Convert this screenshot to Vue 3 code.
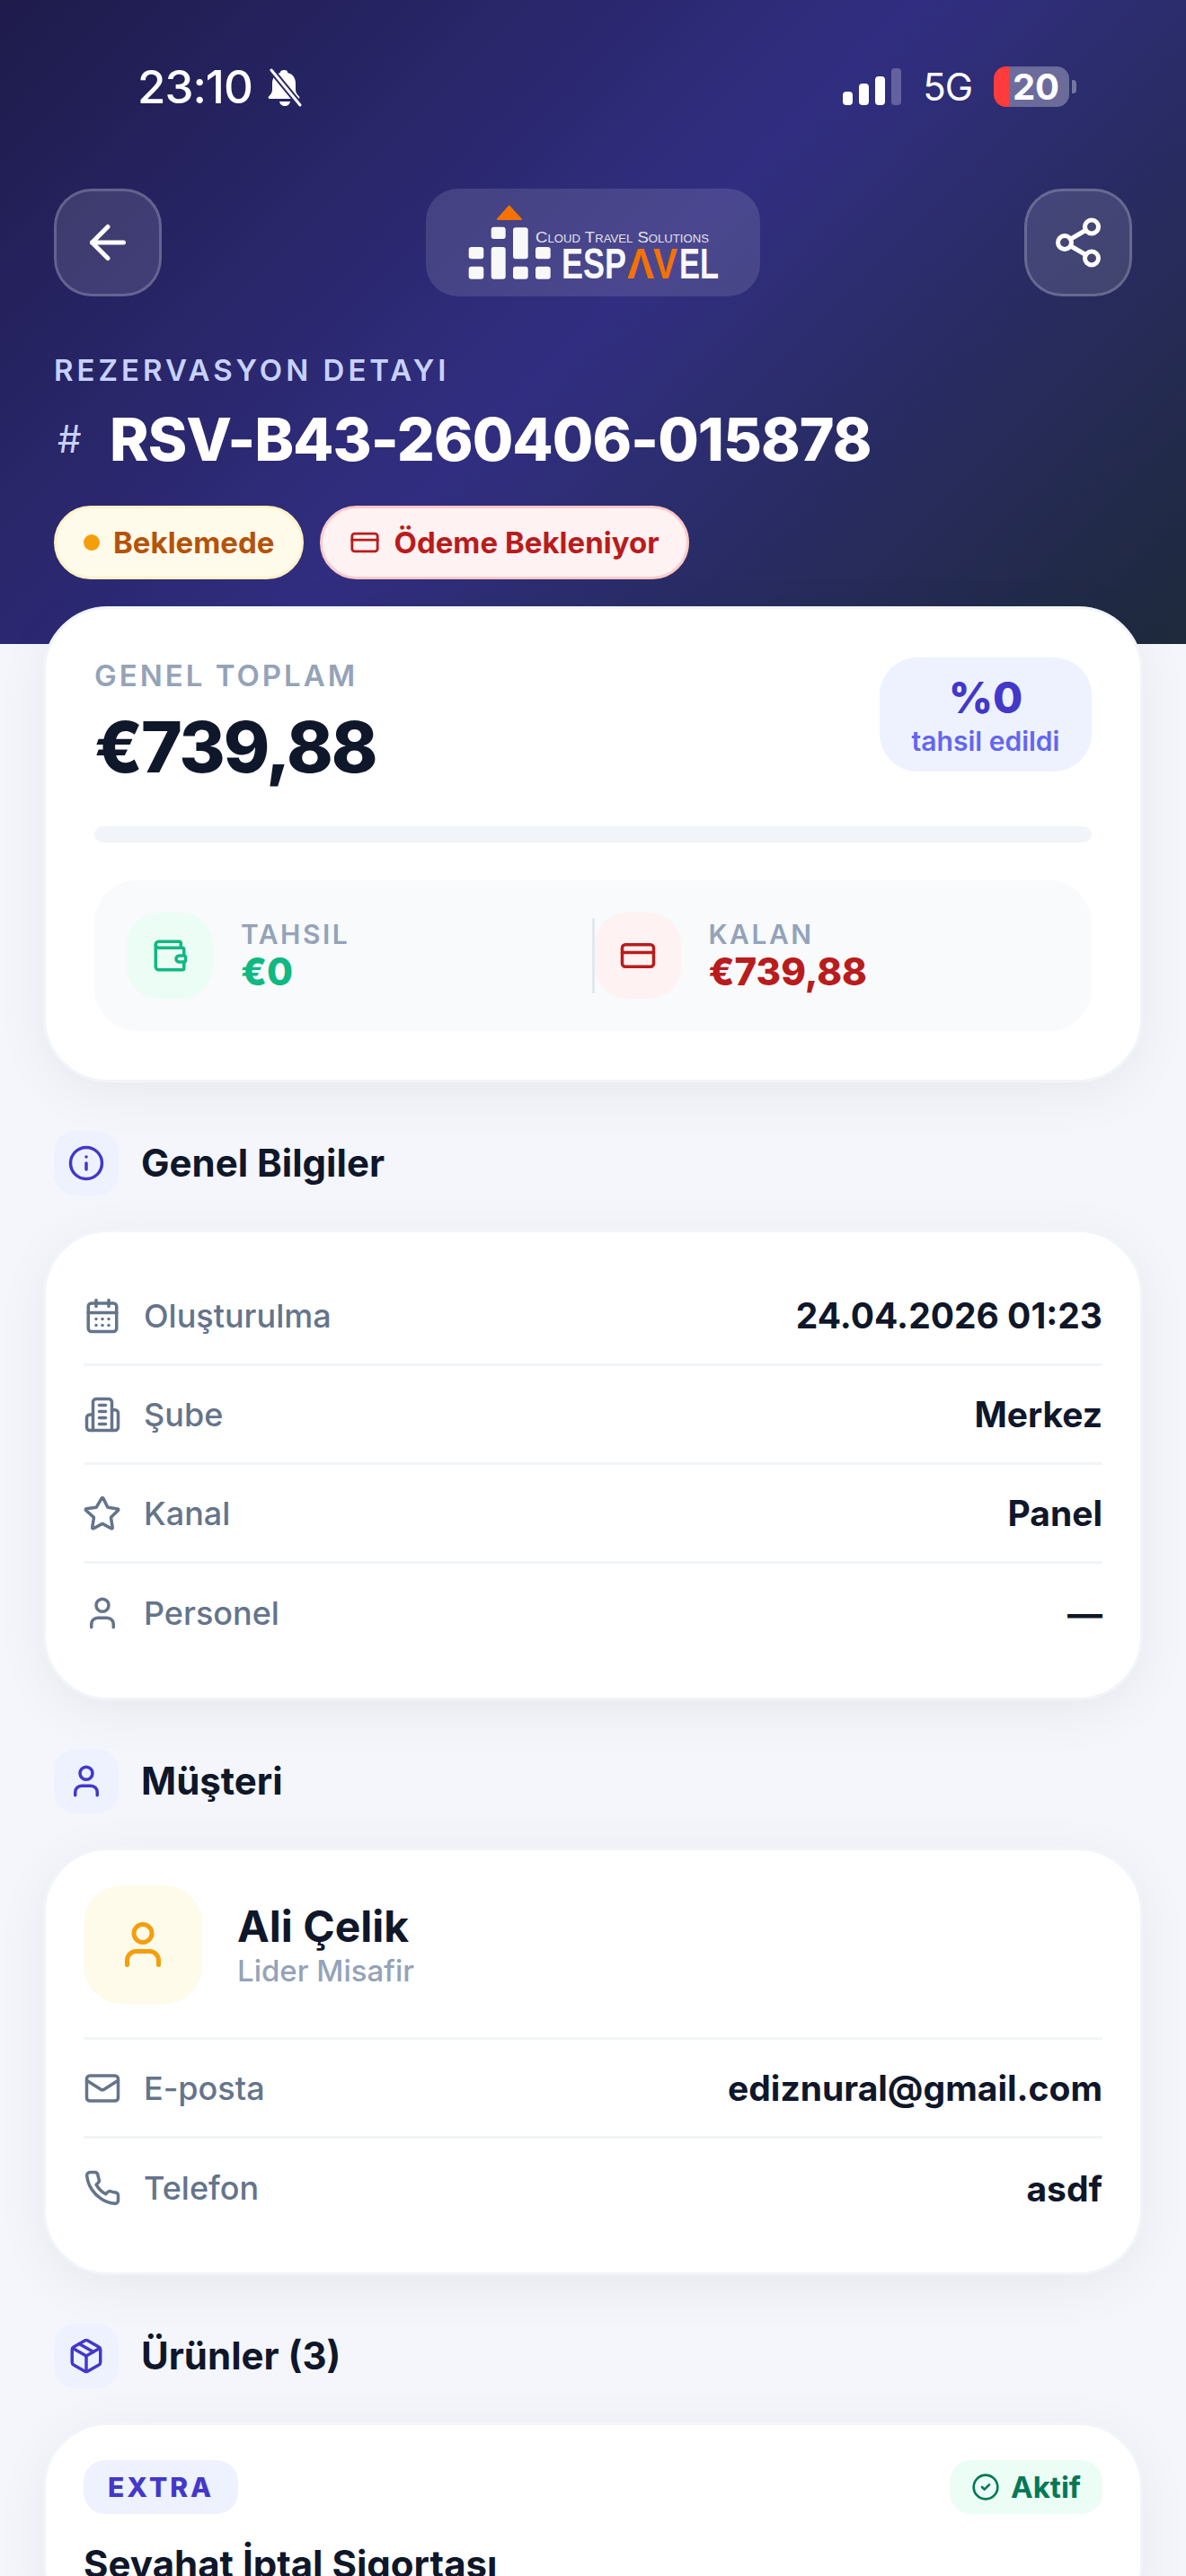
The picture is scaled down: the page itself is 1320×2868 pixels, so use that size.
<script setup>
const icons = {
  arrow: '<path d="m12 19-7-7 7-7"/><path d="M19 12H5"/>',
  share: '<circle cx="18" cy="5" r="3"/><circle cx="6" cy="12" r="3"/><circle cx="18" cy="19" r="3"/><line x1="8.59" x2="15.42" y1="13.51" y2="17.49"/><line x1="15.41" x2="8.59" y1="6.51" y2="10.49"/>',
  card: '<rect width="20" height="14" x="2" y="5" rx="2"/><line x1="2" x2="22" y1="10" y2="10"/>',
  wallet: '<path d="M19 7V4a1 1 0 0 0-1-1H5a2 2 0 0 0 0 4h15a1 1 0 0 1 1 1v4h-3a2 2 0 0 0 0 4h3a1 1 0 0 0 1-1v-2a1 1 0 0 0-1-1"/><path d="M3 5v14a2 2 0 0 0 2 2h15a1 1 0 0 0 1-1v-4"/>',
  info: '<circle cx="12" cy="12" r="10"/><path d="M12 16v-4"/><path d="M12 8h.01"/>',
  calendar: '<path d="M8 2v4"/><path d="M16 2v4"/><rect width="18" height="18" x="3" y="4" rx="2"/><path d="M3 10h18"/><path d="M8 14h.01"/><path d="M12 14h.01"/><path d="M16 14h.01"/><path d="M8 18h.01"/><path d="M12 18h.01"/><path d="M16 18h.01"/>',
  building: '<path d="M6 22V4a2 2 0 0 1 2-2h8a2 2 0 0 1 2 2v18Z"/><path d="M6 12H4a2 2 0 0 0-2 2v6a2 2 0 0 0 2 2h2"/><path d="M18 9h2a2 2 0 0 1 2 2v9a2 2 0 0 1-2 2h-2"/><path d="M10 6h4"/><path d="M10 10h4"/><path d="M10 14h4"/><path d="M10 18h4"/>',
  star: '<path d="M11.5 2.3a.55.55 0 0 1 1 0l2.7 5.6a.55.55 0 0 0 .4.3l6.1.9a.55.55 0 0 1 .3.95l-4.4 4.3a.55.55 0 0 0-.16.5l1 6.1a.55.55 0 0 1-.8.6l-5.4-2.9a.55.55 0 0 0-.52 0l-5.4 2.9a.55.55 0 0 1-.8-.6l1-6.1a.55.55 0 0 0-.16-.5L1.5 10a.55.55 0 0 1 .3-.95l6.1-.9a.55.55 0 0 0 .4-.3z"/>',
  user: '<path d="M19 21v-2a4 4 0 0 0-4-4H9a4 4 0 0 0-4 4v2"/><circle cx="12" cy="7" r="4"/>',
  mail: '<rect width="20" height="16" x="2" y="4" rx="2"/><path d="m22 7-8.97 5.7a1.94 1.94 0 0 1-2.06 0L2 7"/>',
  phone: '<path d="M22 16.92v3a2 2 0 0 1-2.18 2 19.79 19.79 0 0 1-8.63-3.07 19.5 19.5 0 0 1-6-6 19.79 19.79 0 0 1-3.07-8.67A2 2 0 0 1 4.11 2h3a2 2 0 0 1 2 1.72 12.84 12.84 0 0 0 .7 2.81 2 2 0 0 1-.45 2.11L8.09 9.91a16 16 0 0 0 6 6l1.27-1.27a2 2 0 0 1 2.11-.45 12.84 12.84 0 0 0 2.81.7A2 2 0 0 1 22 16.92z"/>',
  box: '<path d="M11 21.73a2 2 0 0 0 2 0l7-4A2 2 0 0 0 21 16V8a2 2 0 0 0-1-1.73l-7-4a2 2 0 0 0-2 0l-7 4A2 2 0 0 0 3 8v8a2 2 0 0 0 1 1.73z"/><path d="M12 22V12"/><path d="m3.3 7 8.7 5 8.7-5"/><path d="m7.5 4.27 9 5.15"/>',
  check: '<circle cx="12" cy="12" r="10"/><path d="m9 12 2 2 4-4"/>'
}
const infoRows = [
  { icon: 'calendar', label: 'Oluşturulma', value: '24.04.2026 01:23' },
  { icon: 'building', label: 'Şube', value: 'Merkez' },
  { icon: 'star', label: 'Kanal', value: 'Panel' },
  { icon: 'user', label: 'Personel', value: '—' }
]
const contactRows = [
  { icon: 'mail', label: 'E-posta', value: 'ediznural@gmail.com' },
  { icon: 'phone', label: 'Telefon', value: 'asdf' }
]
const bars = [
  { h: 15, on: true },
  { h: 24, on: true },
  { h: 32, on: true },
  { h: 41, on: false }
]
</script>

<template>
  <div class="page">
    <header class="hero">
      <div class="status">
        <div class="status-left">
          <span class="time">23:10</span>
          <svg class="bell" viewBox="0 0 44 44" width="44" height="44">
            <path d="M22 3c1.8 0 3 1.3 3.2 3 5.8 1.4 8.8 6 8.8 12v7c0 3 1.6 5 4 7.5 .8.9.3 2.5-1 2.5H5c-1.300 0-1.800-1.600-1-2.500C6.400 30 8 28 8 25v-7c0-6 3-10.600 8.800-12C17 4.300 18.200 3 22 3z" fill="#fff"/>
            <path d="M16 38h12c-.5 3-3 5-6 5s-5.500-2-6-5z" fill="#fff"/>
            <path d="M7 3 39 42" stroke="#2a2868" stroke-width="7"/>
            <path d="M7 3 39 42" stroke="#fff" stroke-width="3" stroke-linecap="round"/>
          </svg>
        </div>
        <div class="status-right">
          <div class="signal">
            <i v-for="b in bars" :key="b.h" :class="{ dim: !b.on }" :style="{ height: b.h + 'px' }"></i>
          </div>
          <span class="net">5G</span>
          <div class="battery"><b>20</b></div>
          <i class="nub"></i>
        </div>
      </div>

      <div class="nav">
        <button class="nav-btn">
          <svg class="ic" viewBox="0 0 24 24" width="60" height="60" stroke="#fff" stroke-width="2" v-html="icons.arrow"></svg>
        </button>
        <div class="logo">
          <svg viewBox="0 0 372 120" width="372" height="120">
            <path d="M92.700 18.300 106.700 33.500a1 1 0 0 1-.8 1.500H79.800a1 1 0 0 1-.8-1.500z" fill="#f57200"/>
            <g fill="#f8f8f8">
              <rect x="72.700" y="42.700" width="16" height="13.300" rx="3"/>
              <rect x="97" y="43.300" width="16.700" height="35" rx="3"/>
              <rect x="47.700" y="65" width="16.600" height="13.300" rx="3"/>
              <rect x="72.700" y="65" width="16" height="35.700" rx="3"/>
              <rect x="122" y="65" width="16.700" height="13.300" rx="3"/>
              <rect x="47.700" y="86.700" width="16.600" height="14" rx="3"/>
              <rect x="97" y="86.700" width="16.700" height="14" rx="3"/>
              <rect x="122" y="86.700" width="16.700" height="14" rx="3"/>
            </g>
            <text class="logo-sub" x="122" y="60" textLength="193" lengthAdjust="spacingAndGlyphs">Cloud Travel Solutions</text>
            <text class="logo-big" x="151" y="100" textLength="72" lengthAdjust="spacingAndGlyphs">ESP</text>
            <text class="logo-big orange" x="224" y="100" textLength="30" lengthAdjust="spacingAndGlyphs">Λ</text>
            <text class="logo-big orange" x="253" y="100" textLength="27" lengthAdjust="spacingAndGlyphs">V</text>
            <text class="logo-big" x="282" y="100" textLength="44" lengthAdjust="spacingAndGlyphs">EL</text>
          </svg>
        </div>
        <button class="nav-btn">
          <svg class="ic" viewBox="0 0 24 24" width="60" height="60" stroke="#fff" stroke-width="2" v-html="icons.share"></svg>
        </button>
      </div>

      <div class="eyebrow">REZERVASYON DETAYI</div>
      <h1 class="title"><span class="hash">#</span>RSV-B43-260406-015878</h1>
      <div class="pills">
        <span class="pill amber"><i class="dot"></i>Beklemede</span>
        <span class="pill red">
          <svg class="ic" viewBox="0 0 24 24" width="34" height="34" stroke="#b91c1c" stroke-width="2" v-html="icons.card"></svg>
          Ödeme Bekleniyor
        </span>
      </div>
    </header>

    <main class="content">
      <section class="card total">
        <div class="total-top">
          <div>
            <div class="total-label">GENEL TOPLAM</div>
            <div class="total-amount">€739,88</div>
          </div>
          <div class="rate">
            <strong>%0</strong>
            <span>tahsil edildi</span>
          </div>
        </div>
        <div class="progress"></div>
        <div class="stats">
          <div class="stat">
            <div class="stat-icon green">
              <svg class="ic" viewBox="0 0 24 24" width="42" height="42" stroke="#10b981" stroke-width="2" v-html="icons.wallet"></svg>
            </div>
            <div>
              <div class="stat-label">TAHSIL</div>
              <div class="stat-value green-t">€0</div>
            </div>
          </div>
          <i class="stat-sep"></i>
          <div class="stat">
            <div class="stat-icon rose">
              <svg class="ic" viewBox="0 0 24 24" width="42" height="42" stroke="#b91c1c" stroke-width="2" v-html="icons.card"></svg>
            </div>
            <div>
              <div class="stat-label">KALAN</div>
              <div class="stat-value red-t">€739,88</div>
            </div>
          </div>
        </div>
      </section>

      <div class="sec-head">
        <span class="sec-icon"><svg class="ic" viewBox="0 0 24 24" width="42" height="42" stroke="#4338ca" stroke-width="2" v-html="icons.info"></svg></span>
        <h2>Genel Bilgiler</h2>
      </div>
      <section class="card list">
        <div v-for="r in infoRows" :key="r.label" class="row">
          <svg class="ic" viewBox="0 0 24 24" width="42" height="42" stroke="#64748b" stroke-width="2" v-html="icons[r.icon]"></svg>
          <span class="row-label">{{ r.label }}</span>
          <span class="row-value">{{ r.value }}</span>
        </div>
      </section>

      <div class="sec-head">
        <span class="sec-icon"><svg class="ic" viewBox="0 0 24 24" width="42" height="42" stroke="#4338ca" stroke-width="2" v-html="icons.user"></svg></span>
        <h2>Müşteri</h2>
      </div>
      <section class="card list">
        <div class="person">
          <div class="avatar">
            <svg class="ic" viewBox="0 0 24 24" width="60" height="60" stroke="#f59e0b" stroke-width="2" v-html="icons.user"></svg>
          </div>
          <div>
            <div class="person-name">Ali Çelik</div>
            <div class="person-sub">Lider Misafir</div>
          </div>
        </div>
        <div v-for="r in contactRows" :key="r.label" class="row">
          <svg class="ic" viewBox="0 0 24 24" width="42" height="42" stroke="#64748b" stroke-width="2" v-html="icons[r.icon]"></svg>
          <span class="row-label">{{ r.label }}</span>
          <span class="row-value">{{ r.value }}</span>
        </div>
      </section>

      <div class="sec-head">
        <span class="sec-icon"><svg class="ic" viewBox="0 0 24 24" width="42" height="42" stroke="#4338ca" stroke-width="2" v-html="icons.box"></svg></span>
        <h2>Ürünler (3)</h2>
      </div>
      <section class="card product">
        <div class="product-top">
          <span class="tag">EXTRA</span>
          <span class="active">
            <svg class="ic" viewBox="0 0 24 24" width="32" height="32" stroke="#047857" stroke-width="2" v-html="icons.check"></svg>
            Aktif
          </span>
        </div>
        <div class="product-name">Seyahat İptal Sigortası</div>
      </section>
    </main>
  </div>
</template>

<style scoped>
.page {
  height: 2868px;
  overflow: hidden;
  background: #f4f6fb;
  font-family: Inter, "Noto Sans", sans-serif;
  color: #0f172a;
}
.ic { fill: none; stroke-linecap: round; stroke-linejoin: round; flex: none; display: block; }
.hero {
  height: 717px;
  box-sizing: border-box;
  padding: 74px 60px 0;
  background: linear-gradient(135deg, #1e1b4b 0%, #312e81 50%, #1e293b 100%);
  color: #fff;
}
.status { display: flex; justify-content: space-between; height: 45px; padding: 0 62px 0 93px; }
.status-left { display: flex; align-items: center; gap: 14px; }
.time { font-size: 51px; font-weight: 500; letter-spacing: -1px; line-height: 45px; }
.status-right { display: flex; align-items: center; }
.signal { display: flex; align-items: flex-end; gap: 7px; height: 41px; margin-right: 24px; }
.signal i { width: 11px; border-radius: 4px; background: #fff; }
.signal i.dim { background: rgba(255, 255, 255, .25); }
.net { font-size: 42px; font-weight: 400; margin-right: 24px; letter-spacing: -1px; }
.battery {
  width: 84px; height: 45px; border-radius: 14px; overflow: hidden; position: relative;
  background: linear-gradient(90deg, #ff3b3b 17px, rgba(255, 255, 255, .3) 17px);
  display: flex; align-items: center; justify-content: center;
}
.battery b { font-size: 40px; font-weight: 700; line-height: 45px; padding-left: 10px; }
.nub { width: 5px; height: 15px; margin-left: 3px; border-radius: 0 4px 4px 0; background: rgba(255, 255, 255, .35); }
.nav { display: flex; justify-content: space-between; align-items: center; margin-top: 91px; }
.nav-btn {
  width: 120px; height: 120px; box-sizing: border-box; padding: 0;
  display: flex; align-items: center; justify-content: center;
  border: 3px solid rgba(255, 255, 255, .2); border-radius: 42px;
  background: rgba(255, 255, 255, .12);
}
.logo { width: 372px; height: 120px; border-radius: 36px; background: rgba(255, 255, 255, .12); }
.logo svg { display: block; }
.logo-sub { font-family: "Liberation Sans", sans-serif; font-size: 17px; font-variant: small-caps; fill: #e2e2e6; }
.logo-big { font-family: "Liberation Sans", sans-serif; font-size: 48px; font-weight: 700; fill: #f8f8f8; }
.logo-big.orange { fill: #f57200; }
.eyebrow { margin-top: 62px; font-size: 33px; line-height: 40px; font-weight: 600; letter-spacing: 4px; color: #c7d2fe; }
.title { margin: 17px 0 0; font-size: 66px; line-height: 80px; font-weight: 800; letter-spacing: -1px; display: flex; align-items: center; }
.hash { font-size: 42px; font-weight: 400; color: #c7d2fe; width: 62px; padding-left: 4px; box-sizing: border-box; letter-spacing: 0; }
.pills { display: flex; gap: 18px; margin-top: 34px; }
.pill {
  height: 82px; box-sizing: border-box; padding: 0 30px; border-radius: 41px; border: 3px solid;
  display: flex; align-items: center; gap: 15px; font-size: 33px; font-weight: 700;
}
.pill.amber { background: #fffbeb; border-color: #fef3c7; color: #b45309; }
.pill.red { background: #fef2f2; border-color: #fecaca; color: #b91c1c; }
.dot { width: 18px; height: 18px; border-radius: 50%; background: #f59e0b; }
.content { padding: 0 48px; margin-top: -42px; position: relative; }
.card {
  box-sizing: border-box; background: #fff; border: 3px solid #f1f5f9; border-radius: 72px;
  box-shadow: 0 12px 60px rgba(15, 23, 42, .06);
}
.total { height: 530px; padding: 54px 54px 0; }
.total-top { display: flex; justify-content: space-between; align-items: flex-start; height: 147px; }
.total-label { font-size: 33px; line-height: 40px; font-weight: 600; letter-spacing: 3px; color: #94a3b8; }
.total-amount { font-size: 78px; line-height: 94px; margin-top: 13px; font-weight: 800; letter-spacing: -2px; }
.rate {
  width: 236px; height: 127px; border-radius: 42px; background: #eef2ff;
  display: flex; flex-direction: column; align-items: center; justify-content: center;
}
.rate strong { font-size: 48px; line-height: 58px; font-weight: 800; color: #4338ca; }
.rate span { font-size: 30px; line-height: 38px; font-weight: 600; color: #6366f1; }
.progress { height: 18px; margin-top: 41px; border-radius: 9px; background: #f1f5f9; }
.stats {
  margin-top: 42px; height: 168px; box-sizing: border-box; padding: 0 36px;
  border-radius: 48px; background: #f8fafc; display: flex; align-items: center;
}
.stat { flex: 1; display: flex; align-items: center; gap: 31px; }
.stat-sep { width: 3px; height: 84px; background: #e2e8f0; }
.stat-icon { width: 96px; height: 96px; border-radius: 36px; display: flex; align-items: center; justify-content: center; }
.stat-icon.green { background: #ecfdf5; }
.stat-icon.rose { background: #fef2f2; }
.stat-label { font-size: 30px; line-height: 36px; font-weight: 600; letter-spacing: 2.500px; color: #94a3b8; }
.stat-value { font-size: 42px; line-height: 48px; font-weight: 800; }
.green-t { color: #10b981; }
.red-t { color: #b91c1c; }
.sec-head { display: flex; align-items: center; gap: 25px; margin: 54px 12px 38px; }
.sec-icon { width: 72px; height: 72px; border-radius: 24px; background: #eef2ff; display: flex; align-items: center; justify-content: center; }
.sec-head h2 { margin: 0; font-size: 42px; line-height: 50px; font-weight: 700; }
.list { padding: 39px 42px; }
.row { height: 110px; box-sizing: border-box; display: flex; align-items: center; border-bottom: 3px solid #f1f5f9; }
.row:last-child { border-bottom: 0; }
.row-label { margin-left: 25px; font-size: 36px; font-weight: 500; color: #64748b; }
.row-value { margin-left: auto; font-size: 39px; font-weight: 700; color: #0f172a; }
.person { display: flex; align-items: center; gap: 39px; padding-bottom: 37px; border-bottom: 3px solid #f1f5f9; }
.avatar { width: 132px; height: 132px; border-radius: 42px; background: #fffbeb; display: flex; align-items: center; justify-content: center; }
.person-name { font-size: 48px; line-height: 58px; font-weight: 700; }
.person-sub { font-size: 33px; line-height: 40px; font-weight: 500; color: #94a3b8; }
.product { padding: 39px 42px; }
.product-top { display: flex; justify-content: space-between; }
.tag {
  height: 60px; padding: 0 27px; border-radius: 24px; background: #eef2ff; color: #4338ca;
  display: flex; align-items: center; font-size: 30px; font-weight: 800; letter-spacing: 3px;
}
.active {
  height: 60px; padding: 0 24px; border-radius: 24px; background: #ecfdf5; color: #047857;
  display: flex; align-items: center; gap: 12px; font-size: 33px; font-weight: 700;
}
.product-name { margin-top: 26px; font-size: 42px; line-height: 60px; font-weight: 700; }
</style>
